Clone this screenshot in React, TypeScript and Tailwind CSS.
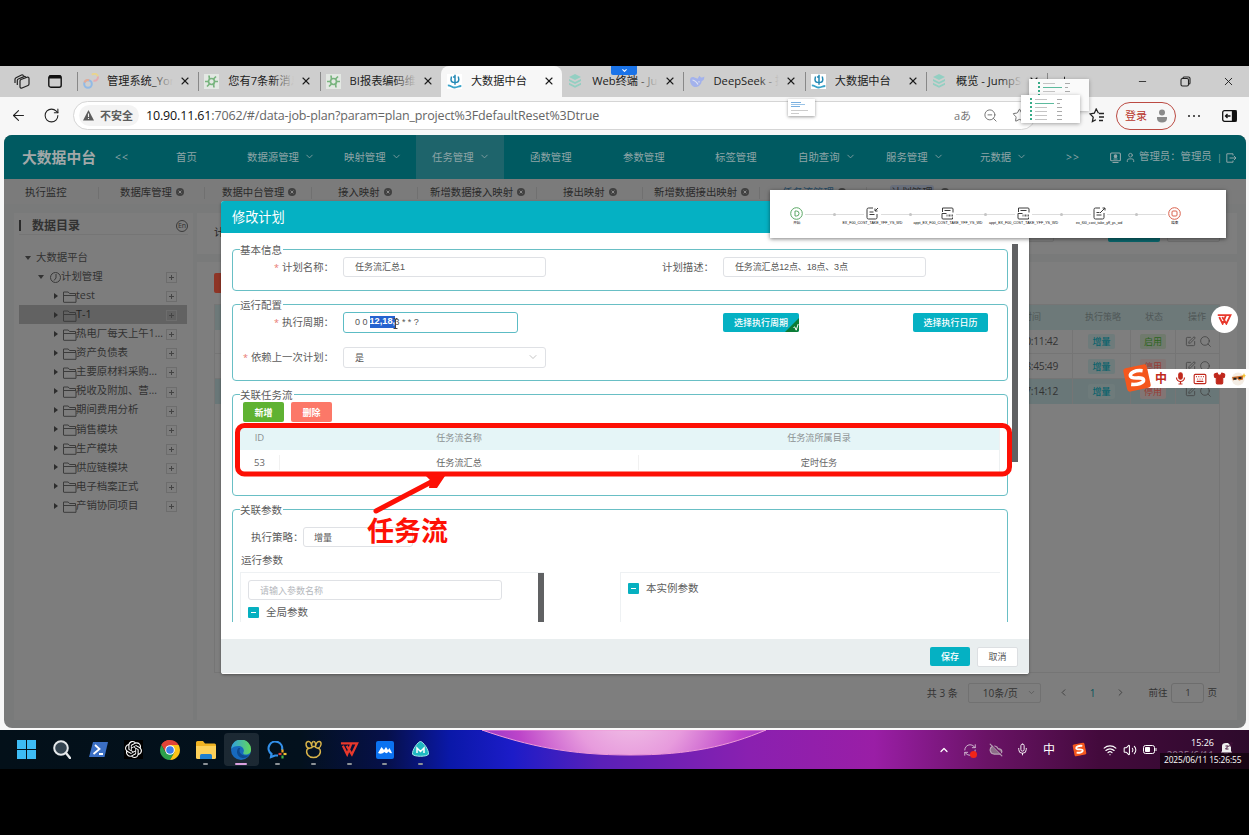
import React from "react";
import {
  ArrowLeft, RotateCw, X, Minus, ZoomOut, Star, ChevronDown, ChevronUp, ChevronLeft, ChevronRight,
  User, Wifi, Volume2, Mic, CloudOff, Search, SquarePen, Keyboard, Shirt, Plus,
  RefreshCw,
} from "lucide-react";
import { SiOpenai } from "react-icons/si";

const UI = "font-['Open_Sans','Noto_Sans_CJK_SC',sans-serif]";
const FORM = "font-['Liberation_Sans','Noto_Sans_CJK_SC',sans-serif]";

/* ---------- browser chrome ---------- */

function Favicon({ kind }: { kind: string }) {
  if (kind === "link")
    return (
      <svg width="16" height="16" viewBox="0 0 16 16" fill="none" strokeWidth="2" opacity=".75">
        <circle cx="5" cy="11" r="3.800" stroke="#7fb4ee" />
        <path d="M1.500 9.500A3.800 3.800 0 0 1 6 7.300" stroke="#f0a080" />
        <path d="M9 1.900A3.300 3.300 0 0 1 14.800 3.500" stroke="#f2d67a" />
        <path d="M14.800 3.500A3.300 3.300 0 0 1 10.500 7.500" stroke="#eda0a8" />
      </svg>
    );
  if (kind === "gear")
    return (
      <svg width="15" height="15" viewBox="0 0 15 15" fill="none" stroke="#78b47e" strokeWidth="1.700">
        <rect width="15" height="15" fill="#e3e8e3" stroke="none" />
        <circle cx="7.500" cy="7.500" r="3" />
        <path d="M5.500 5L5 1.500M9.500 5L12 2.500M10.500 7.500h3.500M9.500 10l.5 3.500M5.500 10L3 12.500M4.500 7.500H1" />
      </svg>
    );
  if (kind === "wave")
    return (
      <svg width="15" height="15" viewBox="0 0 15 15" fill="none" stroke="#2389b5" strokeWidth="1.500">
        <rect width="15" height="15" fill="#fff" stroke="none" />
        <path d="M8 .8v10M4.500 2.500L4 5.500c0 2.500 1.500 3.100 4 3.100s3.800-1 3.800-3.100L11.300 2.500M6 3h1.500" />
        <path d="M.8 11.300c3 0 4.200 2.200 7 2.200s3.500-1.500 6.500-1.500" stroke="#38a3c9" strokeWidth="1.800" />
      </svg>
    );
  if (kind === "layers")
    return (
      <svg width="14" height="14" viewBox="0 0 14 14" fill="#93cfc2">
        <path d="M7 0l6 3-6 3-6-3z" />
        <path d="M1 5l6 3 6-3v2l-6 3-6-3z" />
        <path d="M1 8.800l6 3 6-3v2l-6 3-6-3z" />
      </svg>
    );
  return (
    <svg width="16" height="13" viewBox="0 0 16 13">
      <path d="M1 5C1 2.500 3 1.500 5 2.200c1.500.5 2.500 1.300 4 1.300.3-1.200.8-2 1.800-2.700.2.900.6 1.400 1.200 1.700 1.200.2 2.200 0 3.300-.9.2 2.600-.9 4.200-2.600 4.700-.3 2.600-2 5-5.200 5.700C3.500 12.500 1 9 1 5z" fill="#a3b2ec" />
      <path d="M3.500 5c2.500.3 4 2 5.500 4.500M9.500 6.500l1 .8" fill="none" stroke="#dfe3f2" strokeWidth="1.200" />
    </svg>
  );
}

const browserTabs = [
  { k: "link", t: "管理系统_Yon", active: false, fade: true },
  { k: "gear", t: "您有7条新消息", active: false, fade: true },
  { k: "gear", t: "BI报表编码维护", active: false, fade: true },
  { k: "wave", t: "大数据中台", active: true, fade: false },
  { k: "layers", t: "Web终端 - Jum", active: false, fade: true },
  { k: "whale", t: "DeepSeek - 探", active: false, fade: true },
  { k: "wave", t: "大数据中台", active: false, fade: false },
  { k: "layers", t: "概览 - JumpSe", active: false, fade: true },
];

function TabStrip() {
  return (
    <div className="relative flex h-[31px] bg-[#cecece] pb-px text-[#1c1c1c]">
      <div className="flex w-[77px] shrink-0 items-center pl-[14px]">
        <svg width="16" height="15" viewBox="0 0 16 15" fill="#cecece" stroke="#222" strokeWidth="1.200">
          <path d="M1 9V5.200C1 4.400 1.500 4 2 3.700L7.500 1c1-.4 1.800 0 2 .8" />
          <path d="M3.300 11V6.500c0-.8.5-1.300 1-1.500L10 2.600c1-.4 2 .2 2 1.200" />
          <path d="M6 7c0-.8.4-1.200 1-1.500l6-2.300c1-.4 2 .2 2 1.200V10c0 .8-.4 1.300-1 1.500L8 14c-1 .4-2-.2-2-1.200z" />
        </svg>
        <svg className="ml-[18px]" width="14" height="13" viewBox="0 0 14 13" fill="none" stroke="#111" strokeWidth="1.400">
          <rect x=".8" y=".8" width="12.400" height="11.400" rx="2" />
          <path d="M1 2h12" strokeWidth="3" />
        </svg>
      </div>
      {browserTabs.map((t, i) => (
        <div
          key={i}
          className={
            "relative flex w-[121.300px] shrink-0 items-center " +
            (t.active ? "-mb-px rounded-t-[8px] bg-[#f7f7f7] pb-px pl-[6px]" : "pl-[6px]")
          }
        >
          {!t.active && i !== 4 && <div className="absolute left-0 top-[6px] h-[19px] w-px bg-[#888]" />}
          <div className="flex w-[24px] shrink-0"><Favicon kind={t.k} /></div>
          <div className="relative w-[66px] overflow-hidden whitespace-nowrap pb-px text-[11.200px] leading-[15px]">
            {t.t}
            {t.fade && <div className="absolute right-0 top-0 h-full w-[22px] bg-gradient-to-r from-transparent to-[#cecece]" />}
          </div>
          <X className="ml-[6px] shrink-0" size={12} strokeWidth={2.200} />
        </div>
      ))}
      <div className="h-[17px] w-px self-center bg-[#888]" />
      <Plus className="ml-[9px] self-center" size={15} strokeWidth={1.500} />
      <div className="ml-auto flex items-center pr-[14px]">
        <Minus size={11} strokeWidth={1.800} />
        <svg className="ml-[32px]" width="11" height="11" viewBox="0 0 11 11" fill="none" stroke="#222" strokeWidth="1.100">
          <rect x="1" y="2.500" width="7.500" height="7.500" rx="1.500" />
          <path d="M3 2.500V2q0-1 1-1h4.500Q10 1 10 2.500V7q0 1-1 1" />
        </svg>
        <X className="ml-[31px]" size={13} strokeWidth={1.700} />
      </div>
      <div className="absolute left-[611px] top-0 flex h-[9px] w-[26px] items-center justify-center rounded-b-[2px] bg-[#1a73e8]">
        <ChevronDown className="text-white" size={7} strokeWidth={3.500} />
      </div>
    </div>
  );
}

function Thumb({ rows }: { rows: number }) {
  return (
    <div className="flex flex-col gap-[2px] pt-[3px] pl-[9px]">
      {Array.from({ length: rows }).map((_, i) => (
        <div key={i} className="flex items-center gap-[3px]">
          <div className="h-[2px] w-[2px] bg-[#37ab88]" />
          <div className={i === 1 ? "h-px w-[19px] bg-[#5dbb9e]" : "h-px w-[12px] bg-[#c4c4c4]"} />
          <div className={i === 1 ? "h-px w-[3px] bg-[#aaa]" : "ml-[7px] h-px w-[5px] bg-[#aaa]"} />
        </div>
      ))}
    </div>
  );
}

function AddressBar() {
  return (
    <div className="flex h-[37px] items-center bg-[#f7f7f7] pl-[10px] text-[#222]">
      <ArrowLeft size={17} strokeWidth={1.500} />
      <RotateCw className="ml-[16px]" size={17} strokeWidth={1.500} />
      <div className="ml-[13px] flex h-[29px] w-[963px] shrink-0 items-center rounded-full border border-[#d5d5d5] bg-white pl-[5px]">
        <div className="flex h-[21px] w-[60px] items-center rounded-full bg-[#f3f3f3] pl-[4px] text-[#5c5c5c]">
          <svg width="11" height="11" viewBox="0 0 11 11">
            <path d="M5.500 0L11 10.500H0z" fill="#5c5c5c" />
            <path d="M5.500 3.500v3.500M5.500 8v1" stroke="#f3f3f3" strokeWidth="1.100" />
          </svg>
          <span className="ml-[6px] whitespace-nowrap text-[11px] font-bold leading-none">不安全</span>
        </div>
        <div className="ml-[7px] w-[808px] whitespace-nowrap text-[12.500px] leading-[18px] tracking-[-0.155px] text-[#666]">
          <span className="text-[#111]">10.90.11.61</span>:7062/#/data-job-plan?param=plan_project%3FdefaultReset%3Dtrue
        </div>
        <span className="w-[29px] text-[11px] leading-none text-[#777]">aあ</span>
        <ZoomOut size={15} strokeWidth={1.600} className="shrink-0 text-[#777]" />
        <Star size={15} strokeWidth={1.500} className="ml-[14px] shrink-0 text-[#666]" />
      </div>
      <svg className="ml-[53px] shrink-0" width="16" height="15" viewBox="0 0 16 15" fill="none" stroke="#222" strokeWidth="1.300">
        <path d="M9.500 5.200L7.200 1 5.300 5.200 1 5.900l3.200 3.200-.8 4.500 3.500-1.900M10 5.500h5M10 9h5M10 12.500h4" />
      </svg>
      <div className="ml-[11px] flex h-[28px] w-[60px] shrink-0 items-center rounded-full border border-[#bb4a42] pl-[8px] text-[11px] text-[#b8362d]">
        <span className="whitespace-nowrap leading-none">登录</span>
        <svg className="ml-[9px]" width="12" height="14" viewBox="0 0 12 14" fill="#8a8a8a">
          <circle cx="6" cy="3.500" r="3" />
          <path d="M1 8h10v1.500C11 12 9 13.500 6 13.500S1 12 1 9.500z" />
        </svg>
      </div>
      <div className="ml-[12px] flex gap-[3px]">
        <i className="h-[2px] w-[2px] rounded-full bg-[#222]" />
        <i className="h-[2px] w-[2px] rounded-full bg-[#222]" />
        <i className="h-[2px] w-[2px] rounded-full bg-[#222]" />
      </div>
      <svg className="ml-[22px]" width="15" height="12" viewBox="0 0 15 12" fill="none" stroke="#111" strokeWidth="1.300">
        <rect x=".7" y=".7" width="13.600" height="10.600" rx="1.800" />
        <path d="M10.500 1h3.500v10h-3.500z" fill="#111" />
        <path d="M8.500 6h-5M5.500 4l-2 2 2 2" />
      </svg>
    </div>
  );
}

/* ---------- application ---------- */

const nav = [
  { t: "首页", c: "w-[71px]", d: false },
  { t: "数据源管理", c: "w-[97px]", d: true },
  { t: "映射管理", c: "w-[72px]", d: true },
  { t: "任务管理", c: "w-[88px] bg-[#1e646b] pl-[16px]", d: true },
  { t: "函数管理", c: "w-[119px] pl-[26px]", d: false },
  { t: "参数管理", c: "w-[92px]", d: false },
  { t: "标签管理", c: "w-[83px]", d: false },
  { t: "自助查询", c: "w-[88px]", d: true },
  { t: "服务管理", c: "w-[94px]", d: true },
  { t: "元数据", c: "w-[86px]", d: true },
  { t: ">>", c: "w-[44px] tracking-[1px]", d: false },
];

function Header() {
  return (
    <div className="flex h-[44px] shrink-0 items-stretch bg-[#005a61] text-[10.400px] leading-none text-[#8fa5a7]">
      <div className="flex w-[111px] items-center pl-[18px] text-[14.800px] font-bold text-[#a2a8a8]">大数据中台</div>
      <div className="flex w-[61px] items-center tracking-[1px]">&lt;&lt;</div>
      {nav.map((n) => (
        <div key={n.t} className={"flex shrink-0 items-center whitespace-nowrap " + n.c}>
          {n.t}
          {n.d && <ChevronDown className="-mt-px ml-[5px]" size={11} strokeWidth={1.800} />}
        </div>
      ))}
      <div className="flex items-center">
        <svg width="11" height="11" viewBox="0 0 11 11" fill="none" stroke="#8fa5a7" strokeWidth="1.100">
          <rect x=".6" y="1" width="9.800" height="7.800" rx="1" />
          <circle cx="5.500" cy="4.200" r="1.300" fill="#8fa5a7" />
          <path d="M3.500 7h4M2.500 10.500h6" />
        </svg>
        <User className="ml-[4px]" size={11} />
        <span className="ml-[3px] w-[72px] whitespace-nowrap pb-[2px]">管理员：管理员</span>
        <span className="ml-[6px] text-[9px]">|</span>
        <svg className="ml-[4px] mt-[2px]" width="11" height="10" viewBox="0 0 11 10" fill="none" stroke="#8fa5a7">
          <path d="M7 2.500V.8H.8v8.400H7V7.500M3.500 5H10M8 3l2 2-2 2" />
        </svg>
      </div>
    </div>
  );
}

const pageTabs = [
  { t: "执行监控", c: "w-[95px] pl-[21px]", x: false },
  { t: "数据库管理", c: "w-[106px] pl-[21px]", x: true },
  { t: "数据中台管理", c: "w-[107px] pl-[17px]", x: true },
  { t: "接入映射", c: "w-[106px] pl-[26px]", x: true },
  { t: "新增数据接入映射", c: "w-[119px] pl-[12px]", x: true },
  { t: "接出映射", c: "w-[106px] pl-[26px]", x: true },
  { t: "新增数据接出映射", c: "w-[117px] pl-[11px]", x: true },
  { t: "任务流管理", c: "w-[107px] pl-[22px] text-[#254963]", x: true },
];

function CloseDot() {
  return (
    <svg className="-mt-px ml-[4px] shrink-0" width="8" height="8" viewBox="0 0 8 8">
      <circle cx="4" cy="4" r="4" fill="#414141" />
      <path d="M2.600 2.600l2.800 2.800M5.400 2.600L2.600 5.400" stroke="#8a8a8a" strokeWidth="1" />
    </svg>
  );
}

function PageTabs() {
  return (
    <div className="flex h-[25px] shrink-0 items-center bg-[#7b7b7b] pt-[2px] text-[10.400px] leading-none text-[#2a2a2a]">
      {pageTabs.map((p) => (
        <div key={p.t} className={"flex h-[12px] shrink-0 items-center whitespace-nowrap border-r border-[#707070] " + p.c}>
          {p.t}
          {p.x && <CloseDot />}
        </div>
      ))}
      <div className="ml-[23px] flex items-center">
        <span className="rounded-[3px] bg-[#6a707c] px-px py-[2px]">计划管理</span>
        <div className="ml-[3px]"><CloseDot /></div>
      </div>
    </div>
  );
}

function Folder() {
  return (
    <svg className="shrink-0" width="14" height="12" viewBox="0 0 14 12" fill="none" stroke="#3c3c3c" strokeWidth="1">
      <path d="M.5 11V1h4.700l1.300 1.500h6V4.500M.5 11.300h12.500V4.500H.5" />
    </svg>
  );
}

function PlusBox() {
  return (
    <div className="flex h-[11px] w-[11px] items-center justify-center border border-[#6d6d6d]">
      <svg width="5" height="5" viewBox="0 0 5 5" stroke="#444"><path d="M0 2.500h5M2.500 0v5" /></svg>
    </div>
  );
}

const tree = ["test", "T-1", "热电厂每天上午1...", "资产负债表", "主要原材料采购...", "税收及附加、营...", "期间费用分析", "销售模块", "生产模块", "供应链模块", "电子档案正式", "产销协同项目"];

function Sidebar() {
  return (
    <div className="mt-[9px] ml-[10px] w-[179px] shrink-0 bg-[#7d7d7d] pl-[5px] text-[10.400px] leading-none text-[#323232]">
      <div className="flex h-[22px] w-[169px] items-center border-b border-[#757575] pt-[4px]">
        <div className="h-[11px] w-[2px] bg-[#2b2b2b]" />
        <span className="ml-[11px] text-[12px] font-bold">数据目录</span>
        <span className="ml-auto flex h-[12px] w-[12px] items-center justify-center rounded-full border border-[#3b3b3b] text-[7px]">En</span>
      </div>
      <div className="mt-[13px] flex h-[19px] items-center pl-[6px]">
        <i className="border-x-[3px] border-t-[4px] border-x-transparent border-t-[#333]" />
        <span className="ml-[5px]">大数据平台</span>
      </div>
      <div className="flex h-[19px] w-[168px] items-center pl-[19px]">
        <i className="border-x-[3px] border-t-[4px] border-x-transparent border-t-[#333]" />
        <svg className="ml-[6px] mt-[2px]" width="11" height="11" viewBox="0 0 11 11" fill="none" stroke="#3a3a3a">
          <circle cx="5.500" cy="5.500" r="5" />
          <path d="M6 2v4L4 8.500" />
        </svg>
        <span className="flex-1">计划管理</span>
        <div className="mt-[2px] mr-[10px]"><PlusBox /></div>
      </div>
      {tree.map((t, i) => (
        <div key={t} className={"flex h-[19.100px] w-[168px] items-center pl-[35px] " + (i === 1 ? "bg-[#626262] text-[#222]" : "")}>
          <i className="border-y-[3px] border-l-[4px] border-y-transparent border-l-[#2d2d2d]" />
          <div className="ml-[5px] mt-[2px]"><Folder /></div>
          <span className={"-ml-px flex-1 whitespace-nowrap pb-px " + (i < 2 ? "text-[10.800px]" : "")}>{t}</span>
          <div className="mt-[2px] mr-[10px]"><PlusBox /></div>
        </div>
      ))}
    </div>
  );
}

const plans = [
  { time: "2025-06-11 10:11:42", on: true, c: "h-[24px] border-b border-[#757575]" },
  { time: "2025-06-10 08:45:49", on: false, c: "h-[25px] border-b border-[#757575]" },
  { time: "2025-06-10 17:14:12", on: false, c: "h-[25px] bg-[#697778]" },
];

function MainArea() {
  return (
    <div className="ml-[4px] mt-[9px] flex min-w-0 flex-1 flex-col pr-[9px] text-[9px] leading-none text-[#444]">
      <div className="flex h-[41px] items-start justify-between bg-[#7e7e7e] pl-[17px] pr-[17px] pt-[9px]">
        <span className="pt-[5px] text-[10.400px] text-[#222]">计划名称</span>
        <div className="flex gap-[7px]">
          <div className="h-[20px] w-[203px] rounded-[2px] border border-[#727272]" />
          <div className="ml-[47px] h-[20px] w-[52px] rounded-[2px] bg-[#0a656b]" />
          <div className="h-[20px] w-[53px] rounded-[2px] border border-[#707070]" />
        </div>
      </div>
      <div className="mt-[8px] flex flex-1 flex-col bg-[#7e7e7e] pl-[17px] pr-[17px] pt-[11px]">
        <div className="h-[20px] w-[41px] rounded-[2px] bg-[#8e3526]" />
        <div className="mt-[11px] h-[369px] border border-[#757575]">
          <div className="flex h-[25px] items-center justify-end bg-[#6d7979] pb-[3px] text-[#4f5757]">
            <span className="w-[80px]">创建时间</span>
            <span className="w-[60px]">执行策略</span>
            <span className="w-[43px]">状态</span>
            <span className="w-[31px]">操作</span>
          </div>
          {plans.map((p) => (
            <div key={p.time} className={"flex justify-end " + p.c}>
              <div className="flex w-[110px] items-center justify-end whitespace-nowrap pr-[14px] text-[10.300px] tracking-[-0.300px] text-[#333]">{p.time}</div>
              <div className="flex w-[58px] items-center justify-center border-l border-[#757575]">
                <span className="rounded-[2px] bg-[#6e7b7b] px-[4px] py-[3px] font-medium text-[#08626b]">增量</span>
              </div>
              <div className="flex w-[45px] items-center justify-center border-l border-[#757575]">
                <span className={"rounded-[2px] px-[4px] py-[3px] " + (p.on ? "bg-[#707a6d] text-[#2c6420]" : "bg-[#827574] text-[#973c34]")}>{p.on ? "启用" : "停用"}</span>
              </div>
              <div className="flex w-[44px] items-center gap-[3px] border-l border-[#757575] pl-[9px]">
                <SquarePen size={11} strokeWidth={1.800} />
                <Search size={13} strokeWidth={1.500} />
              </div>
            </div>
          ))}
        </div>
        <div className="mt-[9px] flex h-[21px] items-center justify-end text-[9.500px] text-[#333]">
          <span className="text-[10px]">共 3 条</span>
          <div className="ml-[10px] flex h-[20px] w-[73px] items-center justify-between rounded-[2px] border border-[#717171] pl-[14px] pr-[4px] text-[10px]">
            10条/页 <ChevronDown size={9} className="text-[#555]" />
          </div>
          <ChevronLeft className="ml-[17px]" size={11} strokeWidth={1.700} />
          <span className="ml-[21px] text-[10px] text-[#07545a]">1</span>
          <ChevronRight className="ml-[20px]" size={11} strokeWidth={1.700} />
          <span className="ml-[22px]">前往</span>
          <div className="ml-[4px] flex h-[20px] w-[33px] items-center justify-center rounded-[3px] border border-[#6d6d6d]">1</div>
          <span className="ml-[3px] mr-[3px]">页</span>
        </div>
      </div>
    </div>
  );
}

/* ---------- dialog ---------- */

function Group({ title, cls, children }: { title: string; cls: string; children: React.ReactNode }) {
  return (
    <div className={"relative rounded-[4px] border border-[#69bfc5] " + cls}>
      <span className="absolute -top-[6px] left-[7px] bg-white pr-[1px] text-[10.500px] leading-[13px] text-[#5c5c5c]">{title}</span>
      {children}
    </div>
  );
}

function Label({ req, cls, children }: { req?: boolean; cls: string; children: React.ReactNode }) {
  return (
    <div className={"flex shrink-0 items-center justify-end whitespace-nowrap text-[10.400px] leading-none text-[#5c5c5c] " + cls}>
      {req && <span className="mr-[3px] text-[9px] text-[#e8766e]">*</span>}
      {children}
    </div>
  );
}

function Check() {
  return (
    <span className="flex h-[11px] w-[11px] items-center justify-center rounded-[1px] bg-[#06b0c0]">
      <i className="h-px w-[5px] bg-white" />
    </span>
  );
}

const inputBox = "flex shrink-0 items-center rounded-[3px] border border-[#dfe1e5] bg-white pl-[11px] text-[9px] leading-none text-[#555] whitespace-nowrap ";
const btn = "flex shrink-0 items-center justify-center rounded-[2px] text-[9px] leading-none text-white font-medium whitespace-nowrap ";

function Dialog() {
  return (
    <div className="absolute left-[217px] top-[66px] flex h-[473px] w-[808px] flex-col overflow-hidden rounded-[3px] bg-white shadow-[0_1px_3px_rgba(0,0,0,.35)]">
      <div className="flex h-[32px] shrink-0 items-center bg-[#05b1c3] pl-[11px] pt-[2px] text-[13.200px] leading-none text-white">修改计划</div>
      <div className="mt-[11px] flex h-[378px] shrink-0 overflow-hidden">
        <div className="flex w-[791px] shrink-0 flex-col pl-[11px] pt-[5px]">
          <Group title="基本信息" cls="h-[42px] w-[776px] shrink-0">
            <div className="flex h-[34px] items-center">
              <Label req cls="w-[101px]">计划名称：</Label>
              <div className={inputBox + FORM + " ml-[9px] h-[20px] w-[203px]"}>任务流汇总1</div>
              <Label cls="w-[168px]">计划描述：</Label>
              <div className={inputBox + FORM + " ml-[9px] h-[20px] w-[203px] tracking-[-0.150px]"}>任务流汇总12点、18点、3点</div>
            </div>
          </Group>
          <Group title="运行配置" cls="mt-[13px] h-[77px] w-[776px] shrink-0">
            <div className="flex h-[34px] items-center">
              <Label req cls="w-[101px]">执行周期：</Label>
              <div className={inputBox + FORM + " relative ml-[9px] h-[21px] w-[175px] !border-[#5cbcc5]"}>
                <span className="w-[14.500px]">0 0</span>
                <span className="w-[25px] bg-[#2563cf] py-px text-[9.200px] font-bold text-white">12,18,</span>
                <span className="tracking-[-0.050px]">3 * * ?</span>
                <svg className="absolute left-[49px] top-[5px]" width="5" height="11" viewBox="0 0 5 11" fill="none" stroke="#444">
                  <path d="M.5.5h1.500l.5.500.5-.5h1.500M2.500 1v9M.5 10.500h4" />
                </svg>
              </div>
              <div className={btn + "relative ml-[205px] h-[19px] w-[76px] overflow-hidden bg-[#05b1c3]"}>
                选择执行周期
                <svg className="absolute bottom-0 right-0" width="14" height="14" viewBox="0 0 14 14">
                  <path d="M14 0v14H0z" fill="#0b7c36" />
                  <path d="M8.500 9.500l1.200-.6 1.500 3.300L13.200 6" fill="none" stroke="#fff" strokeWidth="1" />
                </svg>
              </div>
              <div className={btn + "ml-[114px] h-[19px] w-[75px] bg-[#05b1c3]"}>选择执行日历</div>
            </div>
            <div className="flex h-[36px] items-center">
              <Label req cls="w-[101px]">依赖上一次计划：</Label>
              <div className={inputBox + "ml-[9px] h-[21px] w-[203px] justify-between pr-[6px]"}>
                是 <ChevronDown size={12} strokeWidth={1.400} className="text-[#aaa]" />
              </div>
            </div>
          </Group>
          <Group title="关联任务流" cls="mt-[13px] h-[102px] w-[776px] shrink-0">
            <div className="flex gap-[7px] pl-[10px] pt-[7px]">
              <div className={btn + "h-[20px] w-[41px] bg-[#5fb232] !font-bold"}>新增</div>
              <div className={btn + "h-[20px] w-[41px] bg-[#fc7868] !font-bold"}>删除</div>
            </div>
            <div className="ml-[7px] mt-[3px] w-[760px] border-r border-[#eef1f2] text-[9.100px] leading-none">
              <div className="flex h-[25px] items-center bg-[#e5f5f7] text-[#8b9192]">
                <span className="w-[39px] text-center text-[9.500px]">ID</span>
                <span className="w-[360px] text-center">任务流名称</span>
                <span className="flex-1 text-center">任务流所属目录</span>
              </div>
              <div className="flex h-[25px] items-center text-[#666]">
                <span className="w-[39px] text-center text-[9.500px]">53</span>
                <span className="w-[360px] border-x border-[#f1f1f1] py-[3px] text-center">任务流汇总</span>
                <span className="flex-1 text-center">定时任务</span>
              </div>
            </div>
          </Group>
          <Group title="关联参数" cls="mt-[13px] h-[150px] w-[776px] shrink-0">
            <div className="flex h-[16px]" />
            <div className="flex h-[21px] items-center pl-[18px] pt-px">
              <span className="w-[52px] whitespace-nowrap text-[10.500px] leading-none text-[#5c5c5c]">执行策略：</span>
              <div className={inputBox + "h-[20px] w-[110px] !pl-[10px]"}>增量</div>
            </div>
            <div className="mt-[8px] pl-[8px] text-[10.500px] leading-[11px] text-[#5c5c5c]">运行参数</div>
            <div className="mt-[6px] flex pl-[7px] text-[10.500px] leading-none text-[#5c5c5c]">
              <div className="flex h-[80px] w-[304px] border-l border-t border-[#eef1f3]">
                <div className="flex w-[297px] flex-col pl-[7px] pt-[7px]">
                  <div className={inputBox + "h-[20px] w-[254px] !text-[#b5b8bd]"}>请输入参数名称</div>
                  <div className="mt-[7px] flex items-center gap-[7px]"><Check />全局参数</div>
                </div>
                <div className="w-[6px] bg-[#606163]" />
              </div>
              <div className="ml-[76px] flex h-[80px] w-[380px] items-start border-l border-t border-[#eef1f3] pl-[7px] pt-[10px]">
                <div className="flex items-center gap-[7px]"><Check />本实例参数</div>
              </div>
            </div>
          </Group>
        </div>
        <div className="h-[218px] w-[6px] bg-[#606163]" />
      </div>
      <div className="mt-auto flex h-[35px] shrink-0 items-center justify-end gap-[7px] border-b border-white bg-[#e9eeef] pr-[11px] pt-px">
        <div className={btn + "h-[19px] w-[40px] bg-[#05b1c3]"}>保存</div>
        <div className={btn + "h-[20px] w-[41px] border border-[#dcdfe2] bg-white !font-normal !text-[#555]"}>取消</div>
      </div>
    </div>
  );
}

/* ---------- overlays ---------- */

function DocIcon({ kind }: { kind: string }) {
  return (
    <svg width="13" height="13" viewBox="0 0 13 13" fill="none" stroke="#3d3d3d" strokeWidth="1">
      {kind === "in" && <path d="M7 1H2.500Q1 1 1 2.500v8Q1 12 2.500 12h7q1.500 0 1.500-1.500V7M3.500 5h4M3.500 7.500h5M12 1L9 4M9 1.500V4h2.500" />}
      {kind === "out" && <path d="M7 1H2.500Q1 1 1 2.500v8Q1 12 2.500 12h7q1.500 0 1.500-1.500V6M3.500 5.500h3M3.500 8h5M7 6l5-5M9.500 1H12v2.500" />}
      {kind === "sql" && (
        <>
          <path d="M1.500 5V1h9.500q1 0 1 1v3.500M3.500 3.500h6M1 6.500h4.500M1 6.500V11q0 1 1 1h9.500v-1.500" />
          <path d="M5.500 8.500h1M7.500 8.500h2M10.500 8.500H12" strokeWidth="2.200" stroke="#666" />
        </>
      )}
    </svg>
  );
}

const steps = [
  { k: "start", t: "开始" },
  { k: "in", t: "EX_F00_COST_TAKE_YFF_YS_WD" },
  { k: "sql", t: "appt_EX_F00_COST_TAKE_YFF_YS_WD" },
  { k: "sql", t: "appt_EX_F00_COST_TAKE_YFF_YS_WD" },
  { k: "out", t: "ex_f00_cost_take_yff_ys_wd" },
  { k: "end", t: "结束" },
];

function FlowPreview() {
  return (
    <div className="absolute left-[770px] top-[124px] h-[48px] w-[456px] bg-white shadow-[0_1px_4px_rgba(0,0,0,.5)]">
      <div className="flex pt-[17px]">
        {steps.map((s, i) => (
          <div key={i} className={"relative flex w-[75.600px] shrink-0 flex-col items-center " + (i === 0 ? "-ml-[11px]" : "")}>
            {i < 5 && (
              <div className="absolute left-[46px] top-[7px] h-px w-[59px] bg-[#ddd]">
                <i className="absolute -top-px left-[28px] h-[3px] w-[3px] rounded-full bg-[#c4c4c4]" />
              </div>
            )}
            <div className="flex h-[13px] items-center">
              {s.k === "start" ? (
                <svg width="13" height="13" viewBox="0 0 13 13" fill="none" stroke="#5aa864"><circle cx="6.500" cy="6.500" r="5.800" /><path d="M5 4h1.500a2.500 2.500 0 0 1 0 5H5z" /></svg>
              ) : s.k === "end" ? (
                <svg width="13" height="13" viewBox="0 0 13 13" fill="none" stroke="#d9604c"><circle cx="6.500" cy="6.500" r="5.800" /><rect x="4" y="4" width="5" height="5" rx="1" /></svg>
              ) : (
                <DocIcon kind={s.k} />
              )}
            </div>
            <span className="mt-[1px] whitespace-nowrap font-['Liberation_Sans','Noto_Sans_CJK_SC',sans-serif] text-[3.620px] leading-[4px] text-black">{s.t}</span>
          </div>
        ))}
      </div>
    </div>
  );
}

function WpsMark({ size }: { size: number }) {
  return (
    <svg width={size} height={size * 0.75} viewBox="0 0 20 15" fill="none" stroke="#e8382c" strokeWidth="2.400">
      <path d="M1 1.500h11L7.500 13 3 4M7 4l5.500 9L18 1.500h-5" />
    </svg>
  );
}

function SogouS({ size }: { size: number }) {
  return (
    <svg width={size} height={size} viewBox="0 0 26 26" className="-rotate-12">
      <rect x="1" y="1" width="24" height="24" rx="3" fill="#f4571d" />
      <path d="M20 7C13 4.500 7 6.500 7 9.500c0 4.500 12 2.500 12 6.500 0 3.500-7 4-13 2" fill="none" stroke="#fff" strokeWidth="3.600" />
    </svg>
  );
}

function Overlays() {
  return (
    <>
      <div className="absolute left-[788px] top-[33px] h-[17px] w-[27px] bg-white p-[3px] shadow-[0_1px_3px_rgba(0,0,0,.4)]">
        <div className="h-px w-[10px] bg-[#78afe0]" />
        <div className="mt-px h-px w-[14px] bg-[#9ac3e6]" />
        <div className="mt-px h-px w-[9px] bg-[#78afe0]" />
        <div className="mt-[3px] h-px w-[17px] bg-[#ccc]" />
        <div className="mt-[2px] h-px w-[8px] bg-[#ccc]" />
      </div>
      <div className="absolute left-[1029px] top-[13px] h-[32px] w-[60px] bg-[#fafafa] shadow-[0_1px_4px_rgba(0,0,0,.3)]"><Thumb rows={4} /></div>
      <div className="absolute left-[1021px] top-[29px] h-[28px] w-[59px] bg-white shadow-[0_1px_4px_rgba(0,0,0,.35)]"><Thumb rows={6} /></div>
      <FlowPreview />
      <div className="absolute left-[1211px] top-[240px] flex h-[27px] w-[27px] items-center justify-center rounded-full bg-white"><WpsMark size={15} /></div>
      <div className="absolute left-[1136px] top-[303px] flex h-[19px] w-[113px] items-center bg-white pl-[19px] text-[#c0281c]">
        <span className="w-[19px] text-[12px] font-bold leading-none">中</span>
        <svg width="13" height="13" viewBox="0 0 13 13" fill="none" stroke="#c0281c" strokeWidth="1.200"><rect x="4.800" y=".8" width="3.400" height="6.400" rx="1.700" fill="#c0281c" /><path d="M2.500 5.500a4 4 0 0 0 8 0M6.500 9.500V12M4.500 12h4" /></svg>
        <Keyboard className="ml-[6px]" size={14} strokeWidth={2} />
        <Shirt className="ml-[6px]" size={13} fill="#c0281c" />
        <svg className="ml-[5px] shrink-0" width="15" height="14" viewBox="0 0 15 14"><circle cx="7" cy="7" r="6.500" fill="#f4ede4" /><path d="M1 5l11-1.500v4l-4 1-2-2-4 2z" fill="#d0702c" /><path d="M2.500 5.800h3v2h-3zM7.500 5h3v2h-3z" fill="#222" /><path d="M13 1l.8 2 1.200.8-1.200.7L13 6.500l-.8-2L11 3.800l1.200-.8z" fill="#f4c430" /></svg>
      </div>
      <div className="absolute left-[1124px] top-[299px]"><SogouS size={26} /></div>
      <svg className="pointer-events-none absolute left-[230px] top-[350px]" width="790" height="110" viewBox="0 0 790 110" fill="none" stroke="#fd1005">
        <rect x="7.500" y="9.500" width="772" height="48.500" rx="7" strokeWidth="5" />
        <path d="M146 95L205 64" strokeWidth="5" strokeLinecap="round" />
        <path d="M217 57l-22 2 5 5-1 8 8 0z" fill="#fd1005" stroke="none" />
      </svg>
      <span className="absolute left-[367px] top-[448px] whitespace-nowrap text-[27px] font-bold leading-[34px] text-[#fd1005]">任务流</span>
    </>
  );
}

/* ---------- taskbar ---------- */

const apps = [
  <svg width="19" height="19" viewBox="0 0 19 19" fill="#3dbcf5"><path d="M0 0h9v9H0zM10 0h9v9h-9zM0 10h9v9H0zM10 10h9v9h-9z" /></svg>,
  <svg width="18" height="19" viewBox="0 0 18 19" fill="#344450" stroke="#e5e8ea" strokeWidth="2"><circle cx="8" cy="8" r="6.800" /><path d="M13 13l4 5" strokeLinecap="round" strokeWidth="2.400" /></svg>,
  <svg width="19" height="15" viewBox="0 0 19 15"><path d="M4 0h15l-3.500 15H0z" fill="#3b6fc4" /><path d="M6 3l4.500 4L4.500 12M10 12h4" fill="none" stroke="#fff" strokeWidth="1.800" /></svg>,
  <span className="flex h-[19px] w-[19px] items-center justify-center bg-black text-white"><SiOpenai size={17} /></span>,
  <svg width="20" height="20" viewBox="0 0 20 20"><path d="M10 10L1.340 5A10 10 0 0 1 18.660 5z" fill="#e24437" /><path d="M10 10V0A10 10 0 0 0 1.340 5L5.700 12.500z" fill="#e24437" /><path d="M10 10L5.700 12.500 1.340 5A10 10 0 0 0 10 20l4.300-7.500z" fill="#2da14c" /><path d="M10 5h8.660A10 10 0 0 1 10 20l4.300-7.500z" fill="#fbc418" /><circle cx="10" cy="10" r="4.800" fill="#fff" /><circle cx="10" cy="10" r="3.800" fill="#3b7ded" /></svg>,
  <svg width="20" height="18" viewBox="0 0 20 18"><path d="M0 1.500Q0 0 1.500 0H7l2 2.500h9.500Q20 2.500 20 4v12H0z" fill="#f0b323" /><path d="M0 5h20v11.500q0 1.500-1.500 1.500h-17Q0 18 0 16.500z" fill="#fdd15a" /><path d="M4 18v-3.500q0-1.500 1.500-1.500h9q1.500 0 1.500 1.500V18z" fill="#1f7fd0" /></svg>,
  <svg width="20" height="20" viewBox="0 0 20 20"><defs><linearGradient id="edge" x1="0" y1="0" x2="1" y2="0"><stop offset="0" stopColor="#2f9fe0" /><stop offset="1" stopColor="#62d85c" /></linearGradient></defs><circle cx="10" cy="10" r="10" fill="#1769bd" /><path d="M0 9a10 10 0 0 1 20 1c0 3-2.500 4.500-5 4.500-2 0-3.500-.8-2.500-2.200C14 9 11 6 7.500 6 4 6 1.500 7 0 9z" fill="url(#edge)" /><path d="M7.500 8c-3 3-1.500 9 4 10 3 .3 5-1 6.500-3-3 1.200-9 .5-9.500-4-.1-1 .2-2.200.8-3z" fill="#0d4a8f" /></svg>,
  <svg width="20" height="18" viewBox="0 0 20 18" fill="none" stroke="#3390ea" strokeWidth="2.200"><path d="M11 14.500H8L4 16l.5-3A6.800 6.800 0 1 1 15 9" /><path d="M15.500 8.500v3" stroke="#f5a623" /><path d="M15.500 14.500v3" stroke="#44b44c" /><path d="M11.500 13h3" stroke="#e5403b" /><path d="M16.500 13h3" stroke="#f2c234" /></svg>,
  <svg width="19" height="19" viewBox="0 0 19 19" fill="none" stroke="#d9b44a" strokeWidth="1.400"><path d="M5 8.500C1 7 1.500 2 4 1.500S7.500 4 7.800 6.500C7.500 3.500 8 1.500 9.700 1.500" /><path d="M14 8.500c3.500-1.500 4-6.500 1.500-7S12 4 11.500 6.500c.3-3-.2-5-1.800-5" /><path d="M3 9.500C5 7 8 9 8.500 6.500h2.800C11.500 9 14.500 7 16 9.500c1.500 4-1.500 8-6.500 8s-8-4-6.500-8z" /></svg>,
  <WpsMark size={19} />,
  <svg width="18" height="18" viewBox="0 0 18 18"><rect width="18" height="18" rx="2" fill="#0b72f0" /><path d="M2 12l3.500-6 2.500 3 2-3 2 3 1.500-2L16 12q-2 1-3.500-1.500-2 3-4 .5-3 3-6.500 1z" fill="#fff" /></svg>,
  <svg width="17" height="17" viewBox="0 0 17 17"><path d="M8.500.500C11 .500 17 9 16.500 13c-.5 3-15.500 3-16 0C0 9 6 .500 8.500.500z" fill="#1fb9c2" stroke="#a5e8e8" /><path d="M5 12V7l3.500 3.500L12 7v5" fill="none" stroke="#fff" strokeWidth="1.500" /></svg>,
];

function Taskbar() {
  return (
    <div className="relative flex h-[39px] items-center overflow-hidden bg-[linear-gradient(90deg,#031019_0%,#03111d_24%,#06104a_31%,#0a18a8_36%,#1c1cc8_41%,#5a20b8_48%,#8a20b0_60%,#9a1ea6_70%,#6a1366_79%,#430a3c_88%,#2d0a2b_100%)] pl-[8.500px]">
      <svg className="absolute left-[440px] top-0" width="400" height="39" viewBox="0 0 400 39">
        <defs>
          <radialGradient id="bloom" cx="190" cy="-25" r="190" gradientUnits="userSpaceOnUse">
            <stop offset="0" stopColor="#f3c9e8" /><stop offset=".3" stopColor="#e79bdd" /><stop offset=".6" stopColor="#bd45c9" /><stop offset="1" stopColor="#6f27c7" />
          </radialGradient>
        </defs>
        <path d="M42 0C88 16 130 25 190 25S288 16 326 0z" fill="url(#bloom)" stroke="#f09ad8" strokeWidth="1" />
      </svg>
      {apps.map((a, i) => (
        <div key={i} className={"relative flex h-[33px] w-[35.850px] shrink-0 items-center justify-center rounded-[4px] " + (i === 6 ? "bg-white/10" : "")}>
          {a}
          {i > 4 && <i className={"absolute bottom-[1px] h-[2px] rounded-full " + (i === 6 ? "w-[12px] bg-[#dba0e0]" : "w-[5px] bg-[#8c9297]")} />}
        </div>
      ))}
      <div className="absolute right-0 top-0 flex h-full w-[311px] items-center text-white">
        <ChevronUp size={12} strokeWidth={2.500} />
        <div className="relative ml-[13px]"><RefreshCw size={14} strokeWidth={1.500} className="text-[#d8c8d8]" /><i className="absolute -bottom-px right-0 h-[7px] w-[7px] rounded-full bg-[#f22418]" /></div>
        <CloudOff className="ml-[12px] text-[#b8a0b5]" size={14} fill="#8b6d87" />
        <Mic className="ml-[13px]" size={13} strokeWidth={1.700} />
        <span className="ml-[14px] text-[12px] leading-none">中</span>
        <div className="ml-[18px]"><SogouS size={13} /></div>
        <Wifi className="ml-[17px]" size={14} />
        <Volume2 className="ml-[6px]" size={14} strokeWidth={1.800} />
        <svg className="ml-[6px]" width="14" height="9" viewBox="0 0 14 9" fill="none" stroke="#fff"><rect x=".5" y=".5" width="11" height="8" rx="2" /><path d="M2.500 2.500h4v4h-4z" fill="#fff" /><path d="M13 3v3" /></svg>
      </div>
      <div className="absolute right-[35px] top-[7px] flex flex-col items-end text-[9px] leading-[12px] text-white">
        <span>15:26</span>
        <span className="text-[10px] text-white/45">2025/6/11</span>
      </div>
      <svg className="absolute right-[16px] top-[12px]" width="13" height="13" viewBox="0 0 13 13" fill="#eee"><path d="M2 9V4q0-3 4-3h2l3 3v5l1 1.500H1z" /><path d="M4 11.500h4" stroke="#eee" /><path d="M5.500 4h3l-3 3h3M9.500 1h3l-3 3h3" fill="none" stroke="#42103b" /></svg>
      <div className="absolute bottom-0 right-0 flex h-[16px] w-[89px] items-center whitespace-nowrap bg-[#14040f]/85 pb-px pl-[4px] text-[8.400px] leading-none tracking-[-0.130px] text-white">2025/06/11 15:26:55</div>
    </div>
  );
}

export default function App() {
  return (
    <div className={"flex h-[835px] w-[1249px] flex-col overflow-hidden bg-black py-[66px] " + UI}>
      <div className="relative flex h-[703px] flex-col bg-[#f7f7f7]">
        <TabStrip />
        <AddressBar />
        <div className="relative ml-[4px] mt-px flex h-[593px] w-[1242px] shrink-0 flex-col overflow-hidden rounded-[8px] bg-[#797a7a]">
          <Header />
          <PageTabs />
          <div className="flex min-h-0 flex-1 pb-[8px]">
            <Sidebar />
            <MainArea />
          </div>
          <Dialog />
        </div>
        <div className="mt-auto"><Taskbar /></div>
        <Overlays />
      </div>
    </div>
  );
}
